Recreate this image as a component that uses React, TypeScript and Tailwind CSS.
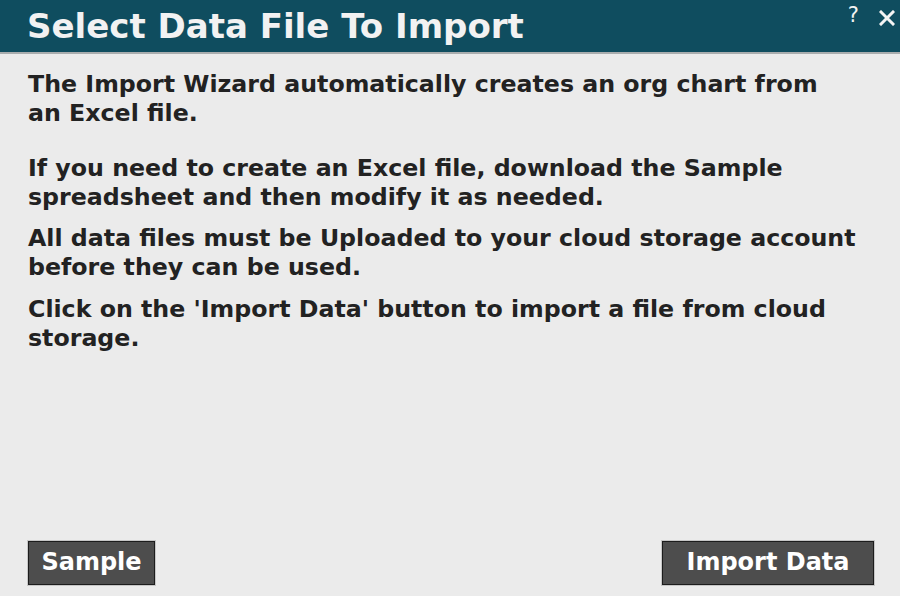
export default function App() {
  return (
    <div
      className="flex h-[596px] w-[900px] flex-col overflow-hidden bg-[#ebebeb]"
      style={{ fontFamily: '"DejaVu Sans", Verdana, sans-serif' }}
    >
      {/* header */}
      <div className="relative flex h-[54px] shrink-0 items-center border-b-2 border-[#a9adae] bg-[#0f4d5f] pl-[27px]">
        <h1 className="text-[34px] font-bold leading-none text-[#f2f2f2]">Select Data File To Import</h1>
        <div className="absolute right-[5px] top-[3px] flex items-start gap-[20px] text-[#f2f2f2]">
          <span className="text-[21px] leading-[24px]">?</span>
          <svg width="16" height="16" viewBox="0 0 16 16" className="mt-[7px]">
            <path d="M2 2 L14 14 M14 2 L2 14" stroke="#f4f4f4" strokeWidth="3" strokeLinecap="square" />
          </svg>
        </div>
      </div>

      {/* body */}
      <div className="flex-1 px-[28px] pt-[16px] text-[23.7px] font-bold leading-[29px] text-[#222]">
        <p className="mb-[26px]">
          The Import Wizard automatically creates an org chart from
          <br />
          an Excel file.
        </p>
        <p className="mb-[12px]">
          If you need to create an Excel file, download the Sample
          <br />
          spreadsheet and then modify it as needed.
        </p>
        <p className="mb-[13px]">
          All data files must be Uploaded to your cloud storage account
          <br />
          before they can be used.
        </p>
        <p>
          Click on the 'Import Data' button to import a file from cloud
          <br />
          storage.
        </p>
      </div>

      {/* footer */}
      <div className="flex shrink-0 items-center justify-between pb-[11px] pl-[28px] pr-[26px]">
        <button className="h-[44px] w-[127px] border border-[#1c1c1c] bg-[#4d4d4d] pb-[2px] text-[24px] font-bold text-white ring-1 ring-[#c6c6c6]">
          Sample
        </button>
        <button className="h-[44px] w-[212px] border border-[#1c1c1c] bg-[#4d4d4d] pb-[2px] text-[24px] font-bold text-white ring-1 ring-[#c6c6c6]">
          Import Data
        </button>
      </div>
    </div>
  )
}
